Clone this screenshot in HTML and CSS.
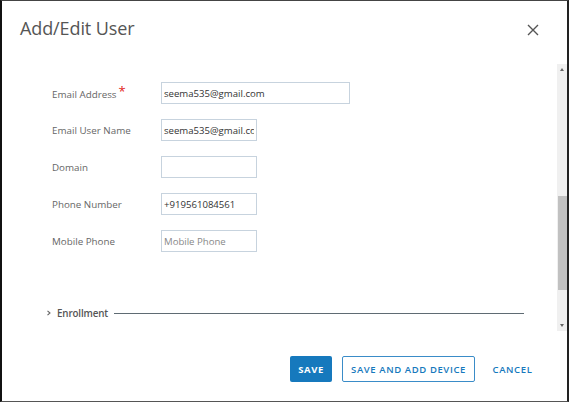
FILE: index.html
```html
<!DOCTYPE html>
<html>
<head>
<meta charset="utf-8">
<link rel="stylesheet" href="styles.css">
</head>
<body>
<div class="modal">
  <div class="header">
    <h1 class="title">Add/Edit User</h1>
    <button class="close" aria-label="Close">
      <svg width="12" height="12" viewBox="0 0 12 12"><path d="M1 1 L11 11 M11 1 L1 11" stroke="#555" stroke-width="1.4" fill="none"/></svg>
    </button>
  </div>
  <div class="body">
    <div class="content">
      <div class="row">
        <label class="label">Email Address<span class="req">*</span></label>
        <input class="input wide" type="text" value="seema535@gmail.com">
      </div>
      <div class="row">
        <label class="label">Email User Name</label>
        <input class="input" type="text" value="seema535@gmail.com">
      </div>
      <div class="row">
        <label class="label">Domain</label>
        <input class="input" type="text" value="">
      </div>
      <div class="row">
        <label class="label">Phone Number</label>
        <input class="input" type="text" value="+919561084561">
      </div>
      <div class="row">
        <label class="label">Mobile Phone</label>
        <input class="input" type="text" placeholder="Mobile Phone">
      </div>
      <div class="section">
        <svg class="chev" width="12" height="8" viewBox="0 0 12 8"><path d="M1.5 1.8 L4 4 L1.5 6.2" stroke="#666" stroke-width="1.1" fill="none"/></svg>
        <span class="section-title">Enrollment</span>
        <span class="rule"></span>
      </div>
    </div>
    <div class="scrollbar">
      <div class="arrow up"></div>
      <div class="track">
        <div class="thumb"></div>
      </div>
      <div class="arrow down"></div>
    </div>
  </div>
  <div class="footer">
    <button class="btn primary">SAVE</button>
    <button class="btn outline">SAVE AND ADD DEVICE</button>
    <button class="btn link">CANCEL</button>
  </div>
</div>
</body>
</html>
```
FILE: styles.css
```css
* { box-sizing: border-box; }
html, body { margin: 0; padding: 0; background: #fff; }
body { font-family: "Open Sans", "Noto Sans", sans-serif; }

.modal {
  width: 569px;
  height: 402px;
  border-top: 1px solid #444;
  border-left: 2px solid #111;
  border-right: 2px solid #222;
  border-bottom: 1px solid #555;
  display: flex;
  flex-direction: column;
  background: #fff;
}

.header {
  height: 62px;
  flex: none;
  display: flex;
  align-items: flex-start;
  justify-content: space-between;
  padding: 15px 28px 0 18px;
}
.title {
  margin: 0;
  font-size: 18px;
  line-height: 24px;
  font-weight: 400;
  color: #555;
  letter-spacing: -0.1px;
}
.close {
  border: 0;
  background: none;
  padding: 0;
  margin-top: 8px;
  width: 12px;
  height: 12px;
  display: flex;
}

.body {
  height: 268px;
  flex: none;
  display: flex;
}
.content {
  flex: 1;
  padding: 19px 0 0 50px;
  display: flex;
  flex-direction: column;
}
.row {
  display: flex;
  align-items: center;
  height: 22px;
  margin-bottom: 15px;
}
.label {
  width: 109px;
  font-size: 9.8px;
  color: #666;
}
.req {
  color: #e2231a;
  font-size: 13px;
  margin-left: 2px;
  position: relative;
  top: -2px;
}
.input {
  width: 96px;
  height: 22px;
  border: 1px solid #c7d3de;
  border-radius: 0;
  font-family: "Open Sans", "Noto Sans", sans-serif;
  font-size: 9.6px;
  color: #333;
  padding: 0 2px;
  margin: 0;
  outline: none;
  background: #fff;
}
.input::placeholder { color: #888; }
.input.wide { width: 189px; }

.section {
  margin-top: 39px;
  margin-left: -7px;
  display: flex;
  align-items: center;
  height: 14px;
}
.chev {
  flex: none;
  margin-left: 1px;
  margin-right: -1px;
}
.section-title {
  font-size: 9.8px;
  font-weight: 600;
  color: #555;
  letter-spacing: -0.15px;
}
.rule {
  height: 1px;
  width: 410px;
  background: #5f6b73;
  margin-left: 6px;
}

.scrollbar {
  width: 10px;
  background: #f0f0f0;
  display: flex;
  flex-direction: column;
  margin-top: 1px;
}
.arrow { height: 10px; flex: none; position: relative; }
.arrow.up::after, .arrow.down::after {
  content: "";
  position: absolute;
  left: 3px;
  border-left: 2px solid transparent;
  border-right: 2px solid transparent;
}
.arrow.up::after { top: 4px; border-bottom: 3px solid #666; }
.arrow.down::after { top: 3px; border-top: 3px solid #666; }
.track { flex: 1; padding-top: 122px; }
.thumb {
  width: 9px;
  margin-left: 1px;
  height: 94px;
  background: #c1c1c1;
}

.footer {
  flex: 1;
  display: flex;
  align-items: flex-start;
  justify-content: flex-end;
  padding: 25px 27px 0 0;
  gap: 10px;
}
.btn {
  font-family: "Open Sans", "Noto Sans", sans-serif;
  font-size: 9.5px;
  font-weight: 700;
  letter-spacing: 0.6px;
  height: 26px;
  padding: 0;
  border-radius: 2px;
  cursor: pointer;
}
.btn.primary {
  width: 42px;
  background: #1679bd;
  color: #fff;
  border: 0;
}
.btn.outline {
  width: 133px;
  background: #fff;
  color: #1679bd;
  border: 1px solid #3a8cc8;
  font-weight: 600;
}
.btn.link {
  width: 55px;
  background: none;
  border: 0;
  color: #1679bd;
  font-weight: 600;
}
```
